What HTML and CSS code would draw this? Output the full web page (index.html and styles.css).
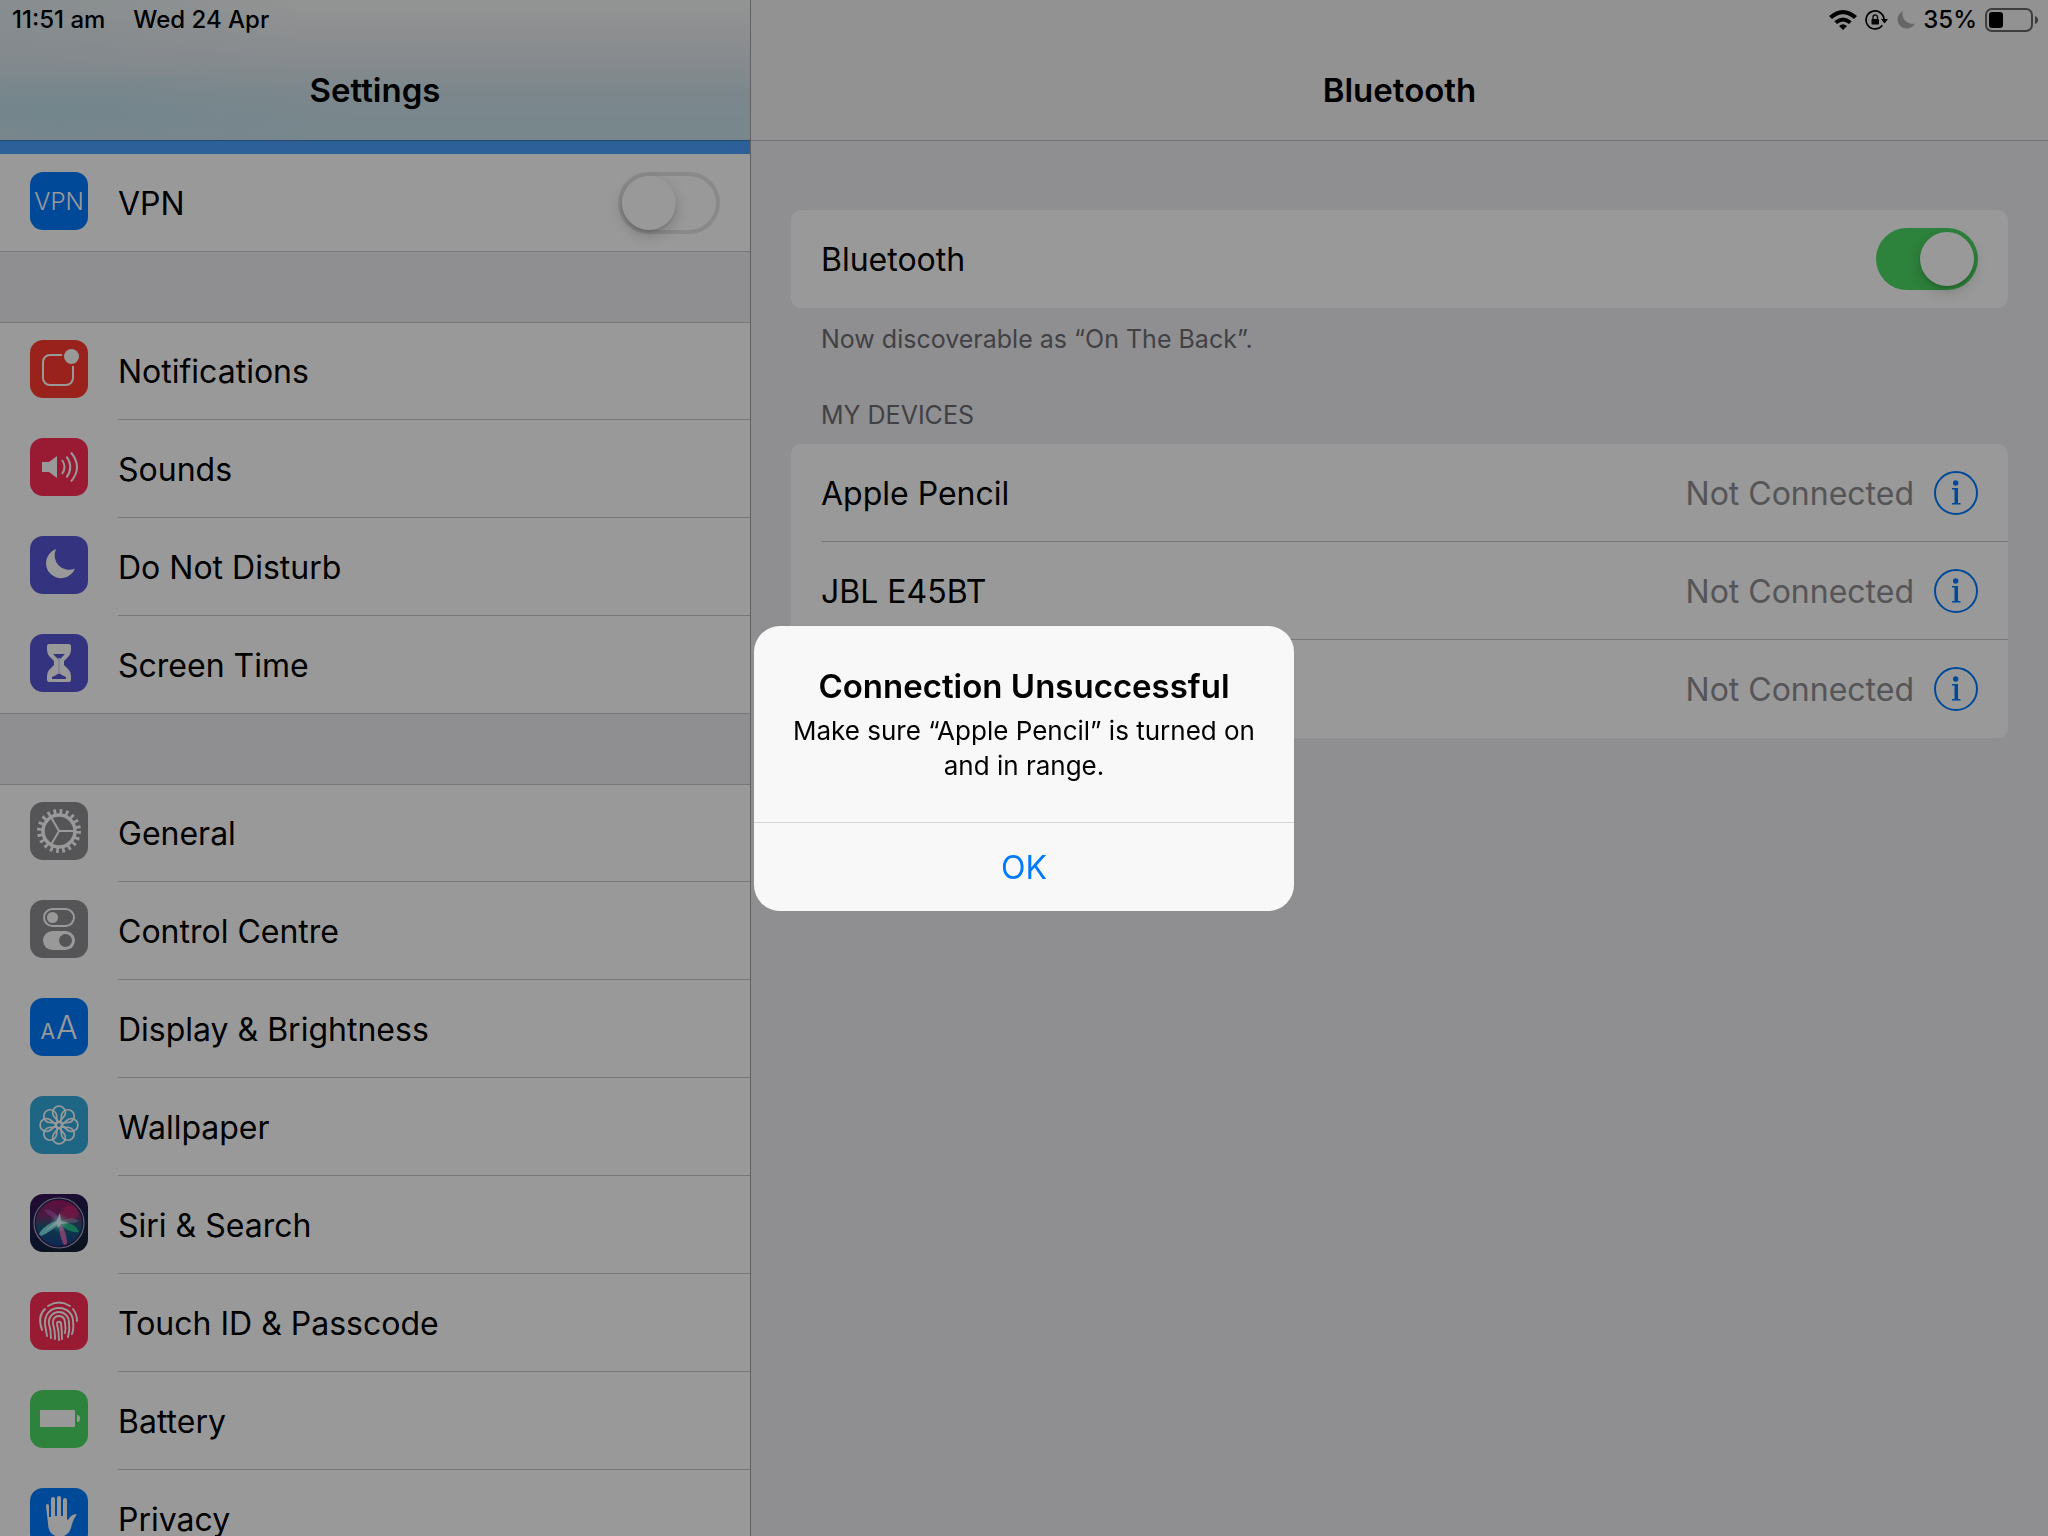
FILE: index.html
```html
<!DOCTYPE html>
<html lang="en-AU">
<head>
<meta charset="utf-8">
<meta name="viewport" content="width=device-width, initial-scale=1">
<title>Settings</title>
<link rel="stylesheet" href="styles.css">
</head>
<body>
<div class="app">
  <aside class="sidebar">
    <header class="bar bar-sidebar">
      <div class="status"><span>11:51 am</span><span>Wed 24 Apr</span></div>
      <h1 class="title">Settings</h1>
    </header>
    <div class="selected-strip"></div>
    <nav class="groups">
      <ul class="group">
        <li class="row">
          <span class="tile blue"><span class="vpn">VPN</span></span>
          <label class="label" for="vpn">VPN</label>
          <input class="switch" type="checkbox" role="switch" id="vpn">
        </li>
      </ul>
      <ul class="group ruled">
        <li><a class="row" href="#notifications">
          <span class="tile red"><svg viewBox="0 0 58 58"><path d="M32 15H20a7 7 0 0 0-7 7v16a7 7 0 0 0 7 7h16a7 7 0 0 0 7-7V26" fill="none" stroke="#fff" stroke-width="2"/><circle cx="41.500" cy="16.500" r="7.500" fill="#fff"/></svg></span>
          <span class="label">Notifications</span></a></li>
        <li><a class="row" href="#sounds">
          <span class="tile pink"><svg viewBox="0 0 58 58"><path d="M12 24h7l8-6v22l-8-6h-7z" fill="#fff"/><g fill="none" stroke="#fff" stroke-width="2"><path d="M32 22q5 7 0 14"/><path d="M36.500 18.500q7.500 10.500 0 21"/><path d="M41 14.500q12 14.500 0 29"/></g></svg></span>
          <span class="label">Sounds</span></a></li>
        <li><a class="row" href="#dnd">
          <span class="tile indigo"><svg viewBox="0 0 58 58"><path d="M26 13A15 15 0 1 0 45 32.500A14.500 14.500 0 0 1 26 13z" fill="#fff"/></svg></span>
          <span class="label">Do Not Disturb</span></a></li>
        <li><a class="row" href="#screentime">
          <span class="tile indigo"><svg viewBox="0 0 58 58"><path d="M19 10h20q2 0 2 2v3q0 6-4 9l-3 3v4l3 3q4 3 4 9v3q0 2-2 2H19q-2 0-2-2v-3q0-6 4-9l3-3v-4l-3-3q-4-3-4-9v-3q0-2 2-2z" fill="#fff"/><path d="M23 20h12l-4.500 4.500q-.8 1-.8 2.500v11q0 2 2 3l4.300 2v2H22v-2l4.300-2q2-1 2-3V27q0-1.500-.8-2.500z" fill="#5856d6"/><path d="M29 24v16" stroke="#fff" stroke-width="1.500"/></svg></span>
          <span class="label">Screen Time</span></a></li>
      </ul>
      <ul class="group ruled">
        <li><a class="row" href="#general">
          <span class="tile gray"><svg viewBox="0 0 58 58"><g fill="none" stroke="#fff"><circle cx="29" cy="29" r="19.500" stroke-width="5" stroke-dasharray="2.700 3.426"/><circle cx="29" cy="29" r="16" stroke-width="3.500"/><path d="M29 29h15M29 29l-7.500-13M29 29l-7.500 13" stroke-width="2"/></g></svg></span>
          <span class="label">General</span></a></li>
        <li><a class="row" href="#controlcentre">
          <span class="tile gray"><svg viewBox="0 0 58 58"><rect x="14" y="9" width="30" height="17" rx="8.500" fill="none" stroke="#fff" stroke-width="2"/><circle cx="22.500" cy="17.500" r="5.500" fill="#fff"/><rect x="13" y="31" width="32" height="19" rx="9.500" fill="#fff"/><circle cx="35.500" cy="40.500" r="6.500" fill="#8e8e93"/></svg></span>
          <span class="label">Control Centre</span></a></li>
        <li><a class="row" href="#display">
          <span class="tile blue aa"><span class="a-small">A</span><span class="a-large">A</span></span>
          <span class="label">Display &amp; Brightness</span></a></li>
        <li><a class="row" href="#wallpaper">
          <span class="tile cyan"><svg viewBox="0 0 58 58"><defs><path id="petal" d="M29 26.500L24 20.500A6.400 6.400 0 1 1 34 20.500z"/></defs><g fill="none" stroke="#fff" stroke-width="1.700" stroke-linejoin="round"><use href="#petal"/><use href="#petal" transform="rotate(45 29 29)"/><use href="#petal" transform="rotate(90 29 29)"/><use href="#petal" transform="rotate(135 29 29)"/><use href="#petal" transform="rotate(180 29 29)"/><use href="#petal" transform="rotate(225 29 29)"/><use href="#petal" transform="rotate(270 29 29)"/><use href="#petal" transform="rotate(315 29 29)"/><circle cx="29" cy="29" r="3.500"/></g></svg></span>
          <span class="label">Wallpaper</span></a></li>
        <li><a class="row" href="#siri">
          <span class="tile siri"><svg viewBox="0 0 58 58"><defs>
            <linearGradient id="orb" x1="0" y1="0" x2="0" y2="1"><stop offset="0" stop-color="#a01868"/><stop offset=".35" stop-color="#7a2c70"/><stop offset=".6" stop-color="#14607c"/><stop offset="1" stop-color="#1a3f90"/></linearGradient>
            <radialGradient id="glow"><stop offset="0" stop-color="#fff"/><stop offset=".4" stop-color="#bff" stop-opacity=".6"/><stop offset="1" stop-color="#6df" stop-opacity="0"/></radialGradient></defs>
            <circle cx="29" cy="29" r="25" fill="#2a2550" stroke="#a9a5c8" stroke-width="1.200"/>
            <circle cx="29" cy="29" r="23" fill="url(#orb)"/>
            <path d="M29 28C18 20 14 18 15 16s14 1 14 12z" fill="#c86ac8" opacity=".5"/>
            <path d="M29 28C30 14 38 7 46 14c5 6 3 13-17 14z" fill="#e8286f" opacity=".45"/>
            <path d="M29 28q14-7 20-1-6 4-20 1z" fill="#9fb0c8" opacity=".5"/>
            <path d="M28 26C18 30 12 34 9 40l2 2c7-3 14-8 19-13z" fill="#8ff2f4" opacity=".85"/>
            <path d="M29 28c8 0 17 2 20 10-7 1-14-2-20-10z" fill="#2fdc95" opacity=".75"/>
            <path d="M29 28c0 8 1 16 5 23l3-1c0-7-2-16-8-22z" fill="#f06fb6" opacity=".85"/>
            <path d="M30 19l1 8 8 2-8 1-3 4-1-4-12 7 11-9z" fill="#e8ffff"/>
            <circle cx="29" cy="29" r="10" fill="url(#glow)" opacity=".7"/></svg></span>
          <span class="label">Siri &amp; Search</span></a></li>
        <li><a class="row" href="#touchid">
          <span class="tile pink"><svg viewBox="0 0 58 58"><g fill="none" stroke="#fff" stroke-width="1.900" stroke-linecap="round"><path d="M18 14q11-7 22 0"/><path d="M12 38q-5-14 3-21M43 17q4 5 4 12"/><path d="M17 44q-1-6-2-11c-1-10 5-17 14-17s14 7 14 13q1 8-1 13"/><path d="M21 46q0-8-2-14c-1-7 4-12 10-12s10 5 10 10q1 8-1 15"/><path d="M25 47q0-9-2-15c-1-5 2-8 6-8s6 3 6 7q1 6 0 10"/><path d="M29 48q0-9-2-16c0-3 4-3 4 0q1 6 1 15"/></g></svg></span>
          <span class="label">Touch ID &amp; Passcode</span></a></li>
        <li><a class="row" href="#battery">
          <span class="tile green"><svg viewBox="0 0 58 58"><rect x="10" y="20" width="35" height="17" rx="1" fill="#fff"/><path d="M47 25q3 0 3 3.500T47 32z" fill="#fff"/></svg></span>
          <span class="label">Battery</span></a></li>
        <li><a class="row" href="#privacy">
          <span class="tile blue"><svg viewBox="0 0 58 58"><path d="M16 18q0-2 1.500-2T19 18v11h2V11q0-2 2-2t2 2v17h2V10q0-2 2-2t2 2v18h2V12q0-2 2-2t2 2v19l1 1q3-6 9-6-3 4-5 10-2 12-12 13-12-1-12-14z" fill="#fff"/></svg></span>
          <span class="label">Privacy</span></a></li>
      </ul>
    </nav>
  </aside>

  <main class="detail">
    <header class="bar bar-detail">
      <div class="status status-right">
        <svg class="wifi" viewBox="0 0 28 20"><path d="M14 20l-4-4q4-3.500 8 0zM8 14l-2.700-2.800q8.700-7.400 17.400 0L20 14q-6-5-12 0zM3 9L0 6q14-12 28 0l-3 3q-11-9.500-22 0z"/></svg>
        <svg class="rotation" viewBox="0 0 24 20"><path d="M17.300 15.300A9 9 0 1 1 19 9" fill="none" stroke="#000" stroke-width="1.700"/><path d="M16 9h7l-3.500 4.500z"/><rect x="6.500" y="9" width="7.500" height="5.500" rx="1"/><path d="M8 9.500V7.200a2.250 2.250 0 0 1 4.500 0v2.300" fill="none" stroke="#000" stroke-width="1.300"/></svg>
        <svg class="moon" viewBox="0 0 18 18"><path d="M6 0A9.200 9.200 0 1 0 18 12.500A9.800 9.800 0 0 1 6 0z"/></svg>
        <span>35%</span>
        <svg class="battery" viewBox="0 0 54 24"><rect x="1" y="1" width="46" height="22" rx="6" fill="none" stroke="#666" stroke-width="2"/><rect x="4" y="4" width="14" height="16" rx="3"/><path d="M50 8q3 1 3 4t-3 4z" fill="#666"/></svg>
      </div>
      <h2 class="title">Bluetooth</h2>
    </header>
    <div class="content">
      <section class="card">
        <div class="item">
          <label class="label" for="bt">Bluetooth</label>
          <input class="switch" type="checkbox" role="switch" id="bt" checked>
        </div>
      </section>
      <p class="note">Now discoverable as “On The Back”.</p>
      <h3 class="caption">MY DEVICES</h3>
      <ul class="card">
        <li class="item"><span class="label">Apple Pencil</span><span class="state">Not Connected</span><button class="info" type="button" aria-label="Apple Pencil details"><svg viewBox="0 0 44 44"><circle cx="22" cy="22" r="21"/><path d="M18 17h6v15h2.500v1.500H18V32h2.500V18.500H18z"/><circle class="dot" cx="21.700" cy="12" r="2.700"/></svg></button></li>
        <li class="item"><span class="label">JBL E45BT</span><span class="state">Not Connected</span><button class="info" type="button" aria-label="JBL E45BT details"><svg viewBox="0 0 44 44"><circle cx="22" cy="22" r="21"/><path d="M18 17h6v15h2.500v1.500H18V32h2.500V18.500H18z"/><circle class="dot" cx="21.700" cy="12" r="2.700"/></svg></button></li>
        <li class="item"><span class="label"></span><span class="state">Not Connected</span><button class="info" type="button" aria-label="Device details"><svg viewBox="0 0 44 44"><circle cx="22" cy="22" r="21"/><path d="M18 17h6v15h2.500v1.500H18V32h2.500V18.500H18z"/><circle class="dot" cx="21.700" cy="12" r="2.700"/></svg></button></li>
      </ul>
    </div>
  </main>
</div>

<div class="backdrop">
  <div class="alert" role="alertdialog" aria-modal="true" aria-labelledby="alert-title" aria-describedby="alert-text">
    <div class="alert-body">
      <h2 class="alert-title" id="alert-title">Connection Unsuccessful</h2>
      <p class="alert-text" id="alert-text">Make sure “Apple Pencil” is turned on and in range.</p>
    </div>
    <button class="alert-ok" type="button">OK</button>
  </div>
</div>
</body>
</html>
```
FILE: styles.css
```css
* {
  box-sizing: border-box;
}

body {
  margin: 0;
  font-family: Inter, "Liberation Sans", sans-serif;
  font-size: 32px;
  line-height: 40px;
  color: #000;
  background: #efeff4;
}

h1, h2, h3, p, ul {
  margin: 0;
  padding: 0;
  list-style: none;
}

svg {
  display: block;
  flex: none;
}

.app {
  display: grid;
  grid-template-columns: 751px 1fr;
  height: 100vh;
  overflow: hidden;
}

/* Top bars */
.bar {
  flex: none;
  height: 141px;
  border-bottom: 1px solid #bebec2;
}

.bar-sidebar {
  border-bottom-color: #3c79b5;
  background:
    radial-gradient(ellipse at 7% 80%, rgba(186, 222, 232, .8), transparent 30%),
    linear-gradient(90deg, rgba(214, 228, 236, .6), transparent 40%),
    linear-gradient(#f3f5f5 5%, #e4e9ef 38%, #cfe2ea 65%, #c6e1ea 100%);
}

.bar-detail {
  background: #f4f4f6;
}

.status {
  display: flex;
  align-items: center;
  gap: 28px;
  height: 40px;
  padding-left: 12px;
  font-size: 24px;
  font-weight: 500;
}

.status-right {
  justify-content: flex-end;
  gap: 8px;
  padding: 0 9px 0 0;
}

.title {
  padding-top: 30px;
  font-size: 33px;
  font-weight: 600;
  text-align: center;
}

.wifi { width: 28px; height: 20px; }
.rotation { width: 24px; height: 20px; }
.moon { width: 18px; height: 18px; fill: #aaa; }
.battery { width: 54px; height: 24px; }

/* Sidebar */
.sidebar {
  display: flex;
  flex-direction: column;
  min-height: 0;
  border-right: 1px solid #a0a0a4;
}

.selected-strip {
  flex: none;
  height: 13px;
  background: #4ba0ff;
}

.groups {
  display: grid;
  gap: 70px;
  min-height: 0;
  overflow-y: auto;
  scrollbar-width: none;
}

.group {
  background: #fff;
  border-bottom: 1px solid #c8c7cc;
}

.group.ruled {
  border-top: 1px solid #c8c7cc;
}

.row {
  display: flex;
  height: 98px;
  padding: 18px 30px;
  gap: 30px;
  color: inherit;
  text-decoration: none;
}

.group > :last-child.row,
.group > :last-child .row,
.group.ruled > :first-child .row {
  height: 97px;
}

.group.ruled > :first-child .row {
  padding-top: 17px;
}

.ruled > :not(:last-child) {
  background: linear-gradient(#c8c7cc, #c8c7cc) 118px 100% / 100% 1px no-repeat;
}

.label {
  flex: 1;
}

.label, .state {
  padding-top: 2px;
}

.row .label {
  padding-top: 12px;
}

.tile {
  display: flex;
  align-items: center;
  justify-content: center;
  flex: none;
  width: 58px;
  height: 58px;
  border-radius: 13px;
  color: #fff;
  overflow: hidden;
}

.tile svg { width: 58px; height: 58px; }
.blue { background: #007aff; }
.red { background: #ff3b30; }
.pink { background: #ff2d55; }
.indigo { background: #5856d6; }
.gray { background: #8e8e93; }
.cyan { background: #34aadc; }
.green { background: #4cd964; }
.siri { background: linear-gradient(160deg, #3c1058, #16224a 55%, #14202e); }

.vpn { padding-top: 2px; font-size: 24px; font-weight: 300; }
.aa { align-items: baseline; padding-top: 10px; gap: 1px; }
.a-small { font-size: 21px; }
.a-large { font-size: 32px; font-weight: 300; }

/* Switches */
.switch {
  appearance: none;
  display: flex;
  flex: none;
  width: 102px;
  height: 62px;
  margin: 0;
  padding: 4px;
  border-radius: 31px;
  background: #fff;
  box-shadow: inset 0 0 0 4px #e5e5e5;
}

.switch::before {
  content: "";
  width: 54px;
  height: 54px;
  border-radius: 50%;
  background: #fff;
  box-shadow: 0 5px 14px rgba(0, 0, 0, .2), 0 2px 2px rgba(0, 0, 0, .1);
}

.switch:checked {
  justify-content: flex-end;
  background: #4cd964;
  box-shadow: none;
}

/* Detail pane */
.content {
  padding: 69px 40px;
}

.card {
  border-radius: 10px;
  background: #fff;
}

.item {
  display: flex;
  align-items: center;
  height: 98px;
  padding: 0 30px;
  background: linear-gradient(#c8c7cc, #c8c7cc) 30px 100% / 100% 1px no-repeat;
}

.item:last-child {
  background: none;
}

.note, .caption {
  padding-left: 30px;
  font-size: 25px;
  font-weight: 400;
  line-height: 32px;
  color: #6d6d72;
}

.note { padding-top: 15px; }
.caption { padding-top: 44px; padding-bottom: 13px; }

.state {
  color: #8e8e93;
}

.info {
  width: 44px;
  height: 44px;
  margin-left: 20px;
  padding: 0;
  border: 0;
  background: none;
}

.info circle { fill: none; stroke: #007aff; stroke-width: 2; }
.info path, .info .dot { fill: #007aff; stroke: none; }

/* Alert */
.backdrop {
  position: fixed;
  inset: 0;
  display: flex;
  align-items: center;
  justify-content: center;
  background: rgba(0, 0, 0, .4);
}

.alert {
  width: 540px;
  border-radius: 26px;
  background: #f8f8f8;
  text-align: center;
  overflow: hidden;
}

.alert-body {
  padding: 40px 32px 39px;
}

.alert-title {
  padding-bottom: 7px;
  font-size: 33px;
  font-weight: 600;
}

.alert-text {
  font-size: 26px;
  line-height: 35px;
}

.alert-ok {
  width: 100%;
  height: 89px;
  padding: 2px 0 0;
  border: 0;
  border-top: 1px solid #d4d4d6;
  background: none;
  font: inherit;
  color: #007aff;
}
```
